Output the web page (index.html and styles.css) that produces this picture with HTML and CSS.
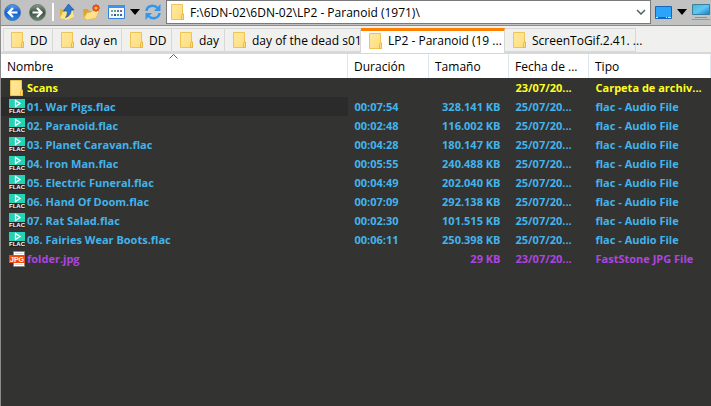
FILE: index.html
```html
<!DOCTYPE html>
<html lang="es">
  <head>
    <meta charset="utf-8">
    <title>LP2 - Paranoid (1971)</title>
    <link rel="stylesheet" href="styles.css">
  </head>
  <body>
    <svg class="defs" aria-hidden="true">
      <defs>
        <linearGradient id="blue" x1="0" y1="0" x2="0" y2="1"><stop offset="0" stop-color="#5b9be8"/><stop offset=".5" stop-color="#1561c9"/><stop offset="1" stop-color="#2f86e6"/></linearGradient>
        <linearGradient id="green" x1="0" y1="0" x2="0" y2="1"><stop offset="0" stop-color="#8b9a8e"/><stop offset=".5" stop-color="#3c5341"/><stop offset="1" stop-color="#6c8571"/></linearGradient>
        <linearGradient id="yellow" x1="0" y1="0" x2="1" y2="1"><stop offset="0" stop-color="#ffe9a0"/><stop offset="1" stop-color="#ffdc7c"/></linearGradient>
        <linearGradient id="screen" x1="0" y1="0" x2="1" y2="1"><stop offset="0" stop-color="#49b7c4"/><stop offset=".5" stop-color="#5fc8f4"/><stop offset="1" stop-color="#1679d8"/></linearGradient>
      </defs>
      <symbol id="folder" viewBox="0 0 14 16">
        <path d="M.5.5h11v9.500h1v5.500H.5z" fill="url(#yellow)" stroke="#efc453"/>
        <path d="M10.500 15.500v-4l1-1.500h1v5.500z" fill="#ffe08a" stroke="#e9b93f"/>
      </symbol>
      <symbol id="flac" viewBox="0 0 16 16">
        <path d="M0 0h16v9H0z" fill="#22d3b6"/>
        <path d="M0 9h16v6H0z" fill="#262626"/>
        <path d="M6.500 1.500v6L11 4.500z" fill="none" stroke="#fff" stroke-width="1.300"/>
      </symbol>
      <symbol id="jpg" viewBox="0 0 16 16">
        <path d="M4.500.500h11v15h-11z" fill="#fff" stroke="#858585"/>
        <path d="M6 2h8v1H6zM6 13h8v1H6z" fill="#d8d8d8"/>
        <path d="M0 4h16v8H0z" fill="#f04a0c"/>
      </symbol>
      <symbol id="caret" viewBox="0 0 10 6"><path d="M0 0h10L5 6z" fill="#000"/></symbol>
    </svg>

    <div class="window">
      <div class="toolbar">
        <button class="tool" aria-label="Atrás">
          <svg width="17" height="17" viewBox="0 0 17 17"><circle cx="8.500" cy="8.500" r="8" fill="url(#blue)" stroke="#356eb5" stroke-width=".8"/><path d="M9 4 4.500 8.500 9 13M5 8.500h8.500" fill="none" stroke="#fff" stroke-width="2.200"/></svg>
        </button>
        <button class="tool" aria-label="Adelante">
          <svg width="17" height="17" viewBox="0 0 17 17"><circle cx="8.500" cy="8.500" r="8" fill="url(#green)" stroke="#67766a" stroke-width=".8"/><path d="M8 4l4.500 4.500L8 13M12 8.500H3.500" fill="none" stroke="#fff" stroke-width="2.200"/></svg>
        </button>
        <span class="separator"></span>
        <button class="tool" aria-label="Subir">
          <svg width="15" height="17" viewBox="0 0 15 17"><path d="M0 5h5l1 2h7l1 1v6L5 16l-5-2z" fill="#e5b23e"/><path d="m0 14 3-6 10-1 1 6-7 3z" fill="#ffe38d"/><path d="M8.500 0 14 6h-3c0 4-1.500 6-5.500 7.500C7.500 11 7.500 9 7 6.500L3.500 7z" fill="#2b79cf" stroke="#1b5299" stroke-width=".7"/></svg>
        </button>
        <button class="tool" aria-label="Nueva carpeta">
          <svg width="17" height="17" viewBox="0 0 17 17"><path d="M0 5h5l1 2h7v7l-9 2-3-1z" fill="#dfa332"/><path d="m1 14 3-5 4-1 1-1h7l-3 7-9 2z" fill="#ffe28c" stroke="#eab94d" stroke-width=".6"/><circle cx="13" cy="4" r="3.300" fill="#ea5b1d"/><path d="M13 0v8M9 4h8M10.300 1.300l5.400 5.400M15.700 1.300l-5.400 5.400" stroke="#d8401a" stroke-width="1"/><circle cx="13" cy="4" r="1.600" fill="#ffc247"/></svg>
        </button>
        <button class="tool" aria-label="Vistas">
          <svg width="17" height="14" viewBox="0 0 17 14"><path d="M.5.5h16v13H.5z" fill="#f5f9fe" stroke="#3284dd"/><path d="M0 0h17v3H0z" fill="#3d93ea"/><path d="M3 5h2v2H3zM3 9h2v2H3z" fill="#7f9dbd"/><path d="M6 5h2v2H6z" fill="#76a95a"/><path d="M6 9h2v2H6z" fill="#334f98"/><path d="M9 5h2v2H9z" fill="#4978bd"/><path d="M9 9h2v2H9z" fill="#49a26a"/><path d="M12 5h2v2h-2z" fill="#a35a6e"/><path d="M12 9h2v2h-2z" fill="#465b9a"/></svg>
        </button>
        <button class="tool drop" aria-label="Más vistas"><svg width="10" height="6"><use href="#caret"/></svg></button>
        <button class="tool" aria-label="Actualizar">
          <svg width="16" height="16" viewBox="0 0 16 16"><path d="M1.500 7C2 1.500 9 0 13 4.500M14.500 9C14 14.500 7 16 3 11.500" fill="none" stroke="#3497e8" stroke-width="2.500"/><path d="M15.500 0v7H9zM.5 16V9H7z" fill="#3497e8"/></svg>
        </button>
        <div class="address">
          <svg width="14" height="16"><use href="#folder"/></svg>
          <input class="address-input" type="text" aria-label="Dirección" value="F:\6DN-02\6DN-02\LP2 - Paranoid (1971)\">
          <button class="tool" aria-label="Historial"><svg width="10" height="6" viewBox="0 0 10 6"><path d="m1 1 4 4 4-4" fill="none" stroke="#53645c" stroke-width="1.500"/></svg></button>
        </div>
        <button class="tool" aria-label="Escritorio">
          <svg width="17" height="13" viewBox="0 0 17 13"><path d="M.5.5h16v12H.5z" fill="#2ea3fa" stroke="#1767b5"/><path d="M1 11h15v1H1z" fill="#1767b5"/><path d="M1 11h2v1H1zM11 11h1v1h-1zM13 11h3v1h-3z" fill="#d5ecff"/></svg>
        </button>
        <button class="tool drop" aria-label="Unidades"><svg width="10" height="6"><use href="#caret"/></svg></button>
        <button class="tool" aria-label="Este equipo">
          <svg width="18" height="16" viewBox="0 0 18 16"><path d="M.5.5h17v10H.5z" fill="url(#screen)" stroke="#3b7f9c"/><path d="M6 11h6v2H6z" fill="#b9c9cd"/><path d="M3 13h12v1H3z" fill="#6f9caa"/><path d="M0 15h18v1H0z" fill="#7ba3ae"/></svg>
        </button>
      </div>

      <nav class="tabs">
        <button class="tab tab-short"><svg width="14" height="16"><use href="#folder"/></svg><span>DD</span></button>
        <button class="tab tab-medium"><svg width="14" height="16"><use href="#folder"/></svg><span>day en</span></button>
        <button class="tab tab-short"><svg width="14" height="16"><use href="#folder"/></svg><span>DD</span></button>
        <button class="tab tab-day"><svg width="14" height="16"><use href="#folder"/></svg><span>day</span></button>
        <button class="tab tab-long"><svg width="14" height="16"><use href="#folder"/></svg><span>day of the dead s01</span></button>
        <button class="tab tab-active"><svg width="14" height="16"><use href="#folder"/></svg><span>LP2 - Paranoid (19 ...</span></button>
        <button class="tab tab-last"><svg width="14" height="16"><use href="#folder"/></svg><span>ScreenToGif.2.41. ...</span></button>
      </nav>

      <table class="files">
        <colgroup>
          <col>
          <col class="col-duration">
          <col class="col-size">
          <col class="col-date">
          <col class="col-type">
        </colgroup>
        <thead>
          <tr>
            <th>Nombre<svg class="sort" width="9" height="5" viewBox="0 0 9 5"><path d="m.5 4.500 4-4 4 4" fill="none" stroke="#5c6662"/></svg></th>
            <th>Duración</th>
            <th>Tamaño</th>
            <th>Fecha de ...</th>
            <th>Tipo</th>
          </tr>
        </thead>
        <tbody>
          <tr class="dir">
            <td><div class="name"><svg width="16" height="16"><use href="#folder"/></svg>Scans</div></td>
            <td></td><td></td><td>23/07/20...</td><td>Carpeta de archiv...</td>
          </tr>
          <tr class="selected">
            <td><div class="name"><svg width="16" height="16"><use href="#flac"/><text x="0" y="14" class="flac-text">FLAC</text></svg>01. War Pigs.flac</div></td>
            <td>00:07:54</td><td>328.141 KB</td><td>25/07/20...</td><td>flac - Audio File</td>
          </tr>
          <tr>
            <td><div class="name"><svg width="16" height="16"><use href="#flac"/><text x="0" y="14" class="flac-text">FLAC</text></svg>02. Paranoid.flac</div></td>
            <td>00:02:48</td><td>116.002 KB</td><td>25/07/20...</td><td>flac - Audio File</td>
          </tr>
          <tr>
            <td><div class="name"><svg width="16" height="16"><use href="#flac"/><text x="0" y="14" class="flac-text">FLAC</text></svg>03. Planet Caravan.flac</div></td>
            <td>00:04:28</td><td>180.147 KB</td><td>25/07/20...</td><td>flac - Audio File</td>
          </tr>
          <tr>
            <td><div class="name"><svg width="16" height="16"><use href="#flac"/><text x="0" y="14" class="flac-text">FLAC</text></svg>04. Iron Man.flac</div></td>
            <td>00:05:55</td><td>240.488 KB</td><td>25/07/20...</td><td>flac - Audio File</td>
          </tr>
          <tr>
            <td><div class="name"><svg width="16" height="16"><use href="#flac"/><text x="0" y="14" class="flac-text">FLAC</text></svg>05. Electric Funeral.flac</div></td>
            <td>00:04:49</td><td>202.040 KB</td><td>25/07/20...</td><td>flac - Audio File</td>
          </tr>
          <tr>
            <td><div class="name"><svg width="16" height="16"><use href="#flac"/><text x="0" y="14" class="flac-text">FLAC</text></svg>06. Hand Of Doom.flac</div></td>
            <td>00:07:09</td><td>292.138 KB</td><td>25/07/20...</td><td>flac - Audio File</td>
          </tr>
          <tr>
            <td><div class="name"><svg width="16" height="16"><use href="#flac"/><text x="0" y="14" class="flac-text">FLAC</text></svg>07. Rat Salad.flac</div></td>
            <td>00:02:30</td><td>101.515 KB</td><td>25/07/20...</td><td>flac - Audio File</td>
          </tr>
          <tr>
            <td><div class="name"><svg width="16" height="16"><use href="#flac"/><text x="0" y="14" class="flac-text">FLAC</text></svg>08. Fairies Wear Boots.flac</div></td>
            <td>00:06:11</td><td>250.398 KB</td><td>25/07/20...</td><td>flac - Audio File</td>
          </tr>
          <tr class="image">
            <td><div class="name"><svg width="16" height="16"><use href="#jpg"/><text x="1" y="11" class="jpg-text">JPG</text></svg>folder.jpg</div></td>
            <td></td><td>29 KB</td><td>23/07/20...</td><td>FastStone JPG File</td>
          </tr>
        </tbody>
      </table>
    </div>
  </body>
</html>
```

FILE: styles.css
```css
* {
  box-sizing: border-box;
}

body {
  margin: 0;
  background-color: #333331;
  font-family: "Open Sans", "Noto Sans", sans-serif;
  font-size: 12px;
  color: #000;
}

button, input {
  font: inherit;
  color: inherit;
  border: none;
  padding: 0;
  background: none;
}

svg {
  display: block;
  flex-shrink: 0;
}

.defs {
  position: absolute;
  width: 0;
  height: 0;
}

.window {
  min-height: 100vh;
  border-left: 1px solid #8c8c8c;
}

.toolbar {
  display: flex;
  align-items: center;
  gap: 8px;
  height: 26px;
  padding: 0 1px 1px 3px;
  background-color: #c2c2c2;
  border-bottom: 1px solid #8c8c8c;
}

.tool {
  display: flex;
}

.drop {
  margin: 0 -3px;
}

.separator {
  width: 2px;
  height: 18px;
  margin: 0 -2px;
  background-color: #fff;
}

.address {
  flex: 1;
  display: flex;
  align-items: center;
  gap: 5px;
  height: 24px;
  margin: 0 -4px 0 -3px;
  padding: 0 4px;
  background-color: #fff;
  border: 1px solid #7a7a7a;
}

.address-input {
  flex: 1;
  min-width: 0;
  outline: none;
}

.tabs {
  display: flex;
  height: 28px;
  padding: 2px 0 0 2px;
  background-color: #f0f0ee;
  border-bottom: 2px solid #d8d8d8;
}

.tab {
  display: flex;
  align-items: center;
  gap: 5px;
  height: 24px;
  padding-left: 8px;
  white-space: nowrap;
  border: 1px solid #d8d8d8;
  border-left: none;
}

.tab:first-child {
  padding-left: 7px;
  border-left: 1px solid #d8d8d8;
}

.tab-short {
  width: 50px;
}

.tab-medium {
  width: 69px;
}

.tab-day {
  width: 53px;
}

.tab-long {
  width: 136px;
}

.tab-active {
  width: 144px;
  height: 26px;
  padding-bottom: 3px;
  background-color: #fff;
  border-top: 3px solid #ff8000;
}

.tab-last {
  width: 131px;
}

.files {
  width: 100%;
  table-layout: fixed;
  border-collapse: collapse;
}

.col-duration {
  width: 81px;
}

.col-size, .col-date {
  width: 80px;
}

.col-type {
  width: 122px;
}

th {
  position: relative;
  height: 24px;
  padding: 0 6px;
  text-align: left;
  font-weight: normal;
  white-space: nowrap;
  background-color: #fff;
  border-right: 1px solid #dfe7ee;
}

.sort {
  position: absolute;
  top: 0;
  left: 50%;
  margin-left: -5px;
}

td {
  height: 19px;
  padding: 0 0 0 7px;
  font-size: 11px;
  font-weight: 700;
  line-height: 18px;
  white-space: nowrap;
  color: #42b4ec;
}

td:first-child {
  padding-left: 8px;
}

td:nth-child(3) {
  padding-right: 8px;
  text-align: right;
}

.name {
  display: flex;
  align-items: center;
  gap: 2px;
}

.selected td:first-child {
  background-color: #2b2b2b;
}

.dir td {
  color: #ffff20;
}

.image td {
  color: #ae45e0;
}

.flac-text {
  font: bold 6px "Liberation Sans", sans-serif;
  fill: #fff;
}

.jpg-text {
  font: bold 7px "Liberation Sans", sans-serif;
  fill: #fff;
}
```
